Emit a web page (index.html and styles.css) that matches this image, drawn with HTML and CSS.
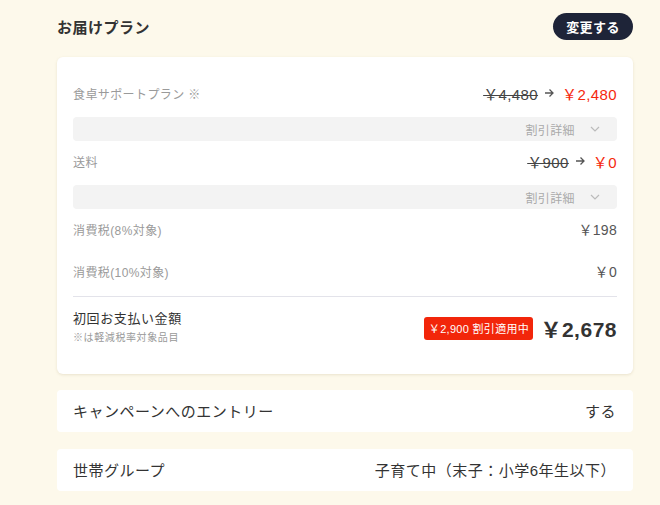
FILE: index.html
```html
<!DOCTYPE html>
<html lang="ja">
<head>
<meta charset="utf-8">
<link rel="stylesheet" href="styles.css">
</head>
<body>
<div class="wrap">
  <div class="header">
    <h2 class="title">お届けプラン</h2>
    <button class="change-btn">変更する</button>
  </div>

  <div class="card">
    <div class="row">
      <span class="label">食卓サポートプラン ※</span>
      <span class="price"><s class="old">￥4,480</s><svg class="arrow" width="11" height="10" viewBox="0 0 11 10"><path d="M1 5h8M5.5 1.5L9 5l-3.5 3.5" fill="none" stroke="#555" stroke-width="1.3"/></svg><span class="new">￥2,480</span></span>
    </div>
    <div class="detail"><span>割引詳細</span><svg class="chev" width="10" height="6" viewBox="0 0 10 6"><path d="M1 1l4 4 4-4" fill="none" stroke="#bbb" stroke-width="1.2"/></svg></div>

    <div class="row">
      <span class="label">送料</span>
      <span class="price"><s class="old">￥900</s><svg class="arrow" width="11" height="10" viewBox="0 0 11 10"><path d="M1 5h8M5.5 1.5L9 5l-3.5 3.5" fill="none" stroke="#555" stroke-width="1.3"/></svg><span class="new">￥0</span></span>
    </div>
    <div class="detail"><span>割引詳細</span><svg class="chev" width="10" height="6" viewBox="0 0 10 6"><path d="M1 1l4 4 4-4" fill="none" stroke="#bbb" stroke-width="1.2"/></svg></div>

    <div class="row">
      <span class="label">消費税(8%対象)</span>
      <span class="tax">￥198</span>
    </div>
    <div class="row">
      <span class="label">消費税(10%対象)</span>
      <span class="tax">￥0</span>
    </div>

    <div class="total">
      <div class="total-left">
        <div class="total-label">初回お支払い金額</div>
        <div class="note">※は軽減税率対象品目</div>
      </div>
      <div class="total-right">
        <span class="badge">￥2,900 割引適用中</span>
        <span class="total-price">￥2,678</span>
      </div>
    </div>
  </div>

  <div class="item item-first">
    <span>キャンペーンへのエントリー</span>
    <span>する</span>
  </div>
  <div class="item">
    <span>世帯グループ</span>
    <span>子育て中（末子：小学6年生以下）</span>
  </div>
</div>
</body>
</html>
```
FILE: styles.css
```css
* { box-sizing: border-box; }
html, body {
  margin: 0;
  padding: 0;
  background: #fdf9eb;
  font-family: "Liberation Sans", "Noto Sans CJK JP", sans-serif;
  color: #333;
}
.wrap {
  margin-left: 57px;
  width: 576px;
  padding-top: 13px;
}
.header {
  display: flex;
  justify-content: space-between;
  align-items: center;
  height: 27px;
}
.title {
  margin: 0;
  font-size: 15px;
  font-weight: 700;
  letter-spacing: 0.5px;
  color: #333;
}
.change-btn {
  height: 27px;
  width: 80px;
  border: none;
  border-radius: 14px;
  background: #1e2438;
  color: #fff;
  font-family: inherit;
  font-size: 13px;
  font-weight: 700;
  letter-spacing: 0.4px;
  padding: 0;
}
.card {
  margin-top: 17px;
  background: #fff;
  border-radius: 6px;
  box-shadow: 0 1px 3px rgba(120, 100, 40, 0.15);
  padding: 16px 16px 16px 16px;
}
.row {
  display: flex;
  justify-content: space-between;
  align-items: center;
  height: 42px;
  padding-bottom: 2px;
}
.label {
  font-size: 12px;
  color: #9a9a9a;
  letter-spacing: 0.4px;
}
.price {
  display: flex;
  align-items: center;
  font-size: 15px;
  letter-spacing: 0.4px;
}
.old {
  color: #444;
  text-decoration-thickness: 1px;
}
.arrow {
  margin: 0 7px 0 6px;
}
.new {
  color: #f5280d;
}
.tax {
  font-size: 14px;
  color: #555;
  letter-spacing: 0.3px;
}
.detail {
  display: flex;
  justify-content: flex-end;
  align-items: center;
  height: 24px;
  margin-top: 2px;
  background: #f3f3f3;
  border-radius: 4px;
  padding-right: 17px;
  font-size: 12px;
  color: #aaa;
  letter-spacing: 0.4px;
}
.chev {
  margin-left: 15px;
}
.total {
  margin-top: 3px;
  border-top: 1px solid #e3e3ea;
  padding: 14px 0 13px;
  display: flex;
  justify-content: space-between;
  align-items: center;
}
.total-label {
  font-size: 13px;
  line-height: 16px;
  letter-spacing: 0.6px;
  color: #333;
}
.note {
  margin-top: 4px;
  font-size: 10px;
  line-height: 14px;
  letter-spacing: 0.6px;
  color: #999;
}
.total-right {
  display: flex;
  align-items: center;
}
.badge {
  display: inline-flex;
  align-items: center;
  justify-content: center;
  width: 109px;
  height: 23px;
  background: #f2260a;
  color: #fff;
  border-radius: 3px;
  font-size: 11px;
  letter-spacing: 0.3px;
}
.total-price {
  margin-left: 7px;
  font-size: 21px;
  font-weight: 700;
  letter-spacing: 0.5px;
  color: #333;
}
.item {
  display: flex;
  justify-content: space-between;
  align-items: center;
  height: 42px;
  margin-top: 17px;
  padding: 0 17px 2px 16px;
  background: #fff;
  border-radius: 4px;
  font-size: 15px;
  letter-spacing: 0.5px;
  color: #333;
}
.item-first {
  margin-top: 16px;
}
```
